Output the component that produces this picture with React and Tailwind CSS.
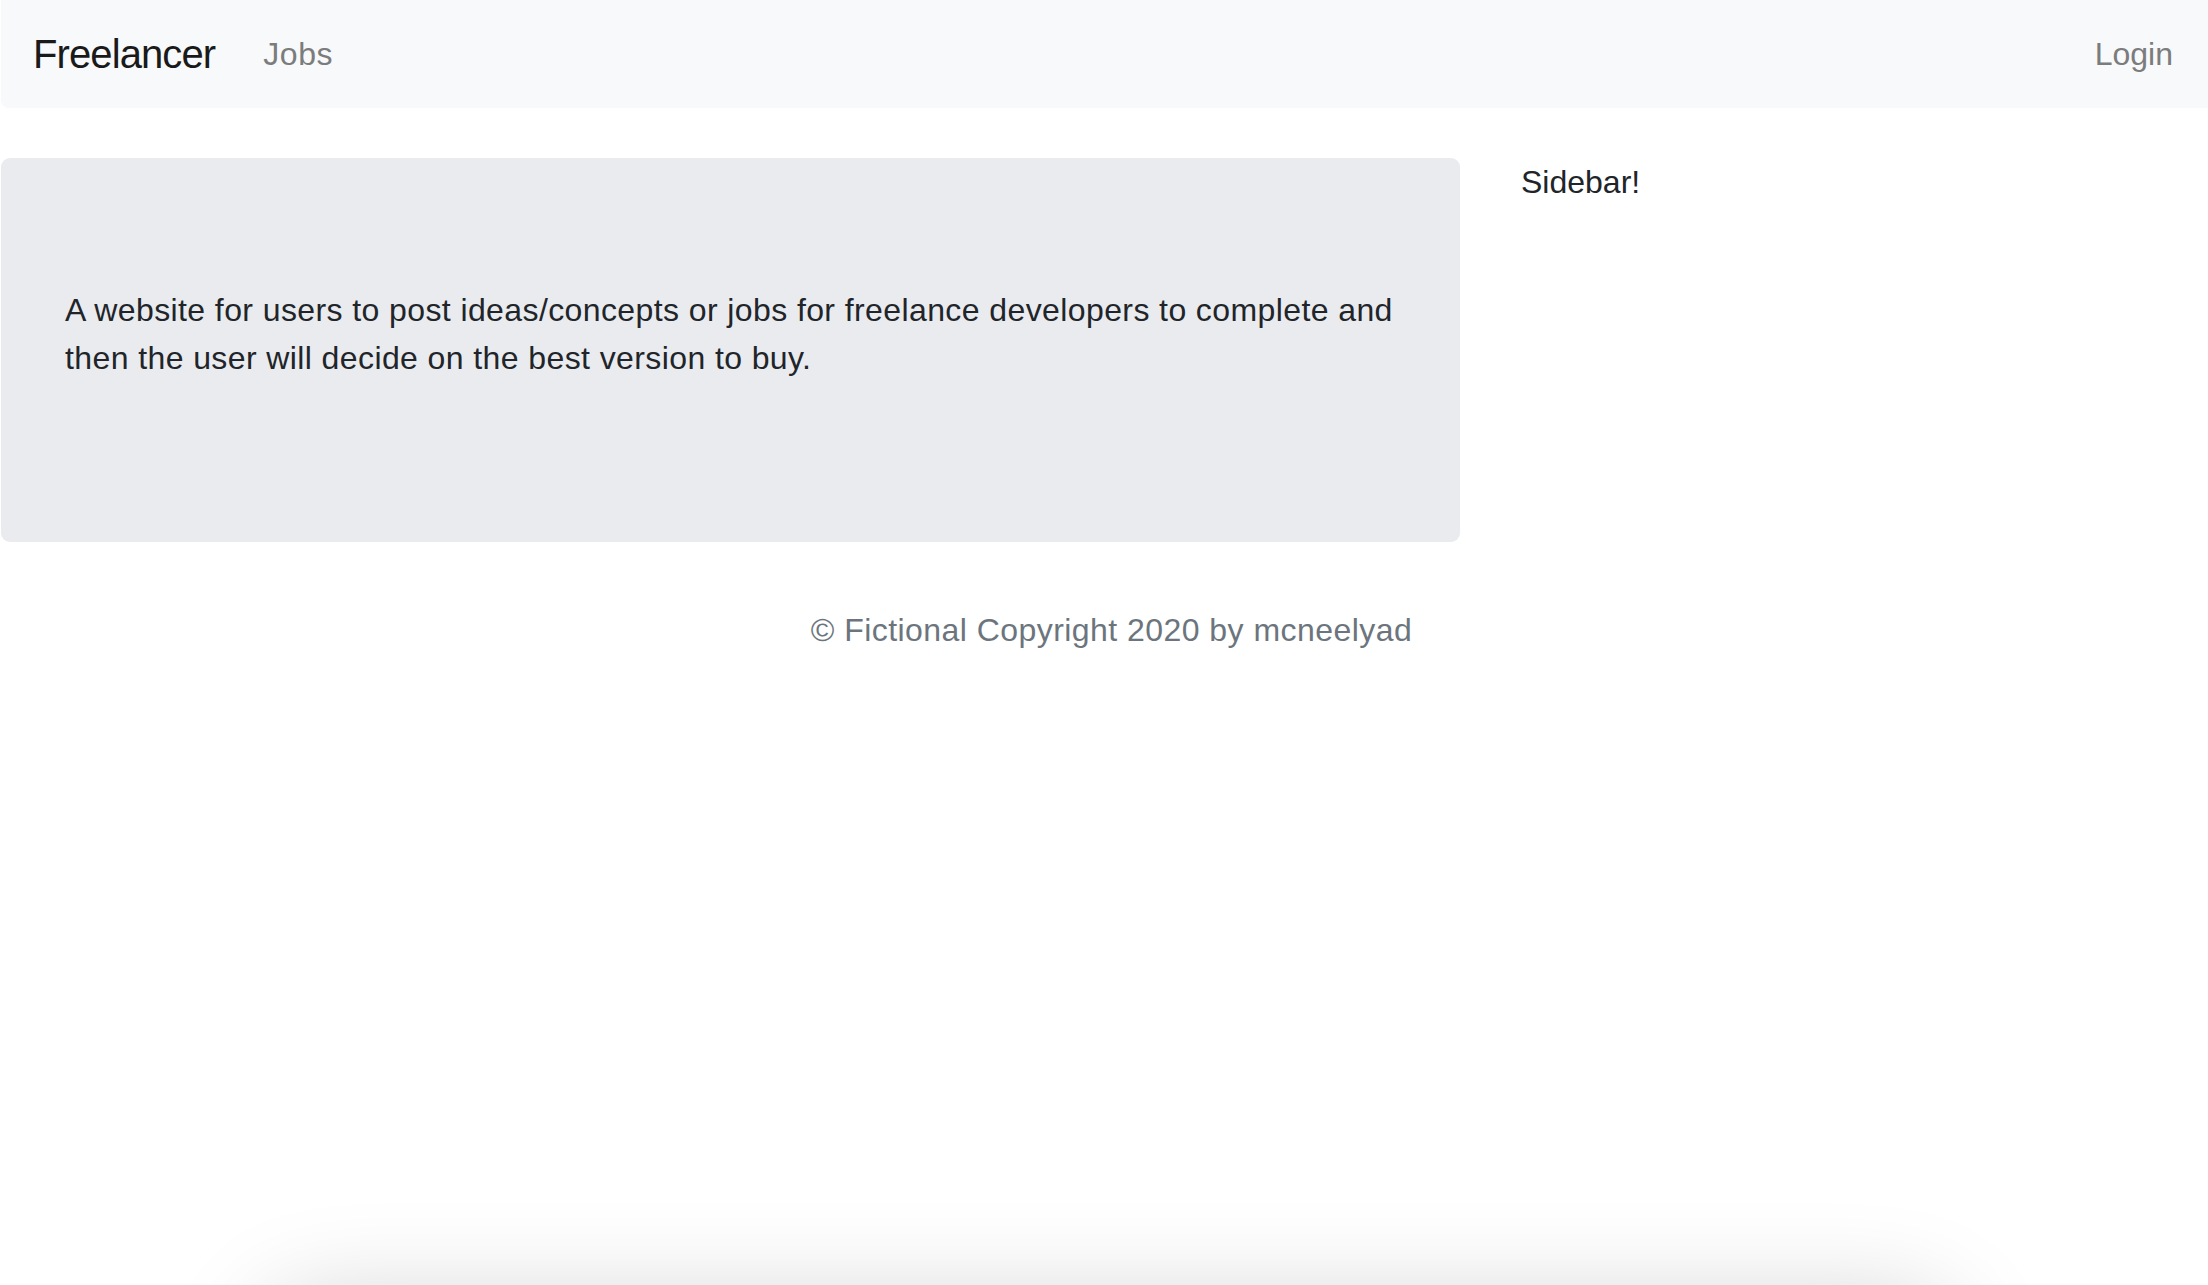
export default function App() {
  return (
    <div
      className="relative h-[1285px] w-[2208px] overflow-hidden bg-white pl-px"
      style={{ fontFamily: '"Liberation Sans", Arial, sans-serif' }}
    >
      <nav className="flex h-[108px] items-center rounded-bl-[8px] bg-[#f8f9fa] pl-[32px] pr-[35px]">
        <span className="mr-[32px] text-[40px] leading-[60px] tracking-[-0.9px] text-[#1a1a1a]">Freelancer</span>
        <span className="px-[16px] text-[32px] leading-[48px] tracking-[0.6px] text-[#7b7c7d]">Jobs</span>
        <span className="ml-auto text-[32px] leading-[48px] text-[#7b7c7d]">Login</span>
      </nav>

      <div className="mt-[50px] flex items-start">
        <div className="w-[1459px] rounded-[9px] bg-[#e9ebef] px-[64px] py-[128px]">
          <p className="mb-[32px] whitespace-nowrap text-[32px] leading-[48px] tracking-[0.4px] text-[#212529]">
            A website for users to post ideas/concepts or jobs for freelance developers to complete and
            <br />
            then the user will decide on the best version to buy.
          </p>
        </div>
        <div className="ml-[61px] text-[32px] leading-[48px] text-[#212529]">Sidebar!</div>
      </div>

      <footer className="mt-[64px] pl-[14px] text-center text-[32px] leading-[48px] tracking-[0.45px] text-[#6c757d]">
        © Fictional Copyright 2020 by mcneelyad
      </footer>

      <div className="absolute left-[260px] right-[250px] top-[1300px] h-[200px] rounded-[60px] bg-[#ececec] shadow-[0_0_100px_rgba(0,0,0,0.18)]" />
    </div>
  );
}
